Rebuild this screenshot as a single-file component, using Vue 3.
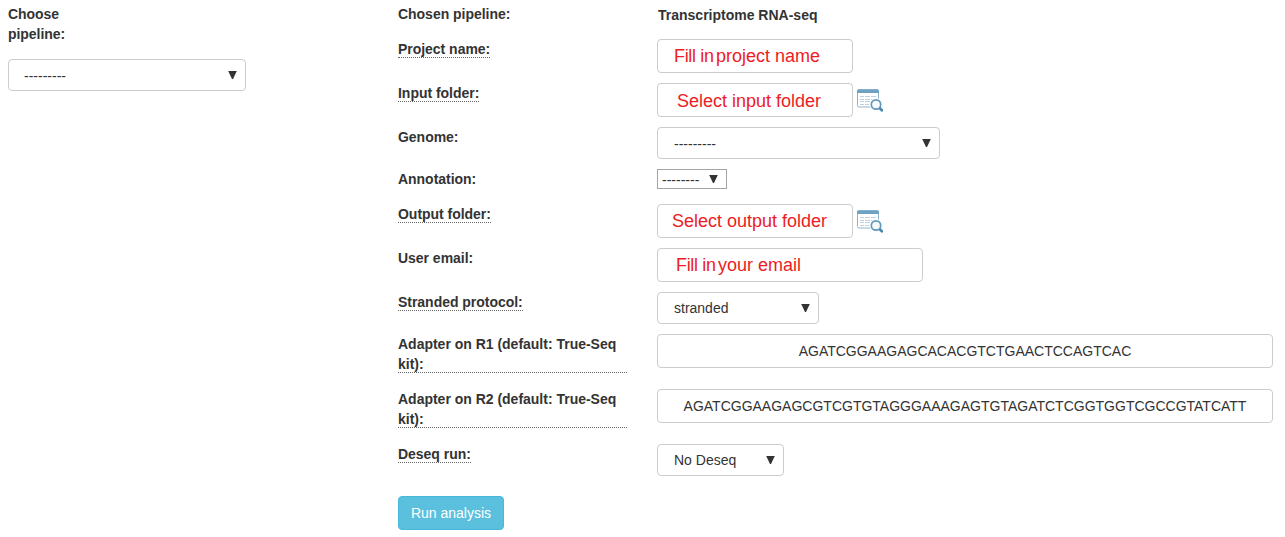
<script setup>
const rows = [
  { id: 'project', label: 'Project name:', tip: true, kind: 'input', parts: ['Fill in', 'project name'] },
  { id: 'infolder', label: 'Input folder:', tip: true, kind: 'input', parts: ['Select input folder'], browse: true },
  { id: 'genome', label: 'Genome:', kind: 'select', value: '---------' },
  { id: 'annotation', label: 'Annotation:', kind: 'select', value: '--------' },
  { id: 'outfolder', label: 'Output folder:', tip: true, kind: 'input', parts: ['Select output folder'], browse: true },
  { id: 'email', label: 'User email:', kind: 'input', parts: ['Fill in', 'your email'] },
  { id: 'stranded', label: 'Stranded protocol:', tip: true, kind: 'select', value: 'stranded' },
  { id: 'r1', label: 'Adapter on R1 (default: True-Seq kit):', tip: true, kind: 'adapter', value: 'AGATCGGAAGAGCACACGTCTGAACTCCAGTCAC' },
  { id: 'r2', label: 'Adapter on R2 (default: True-Seq kit):', tip: true, kind: 'adapter', value: 'AGATCGGAAGAGCGTCGTGTAGGGAAAGAGTGTAGATCTCGGTGGTCGCCGTATCATT' },
  { id: 'deseq', label: 'Deseq run:', tip: true, kind: 'select', value: 'No Deseq' },
]
</script>

<template>
  <div class="page">
    <aside class="side">
      <label class="side-label">Choose pipeline:</label>
      <div class="box select pipeline">
        <span class="value dashes">---------</span>
        <svg class="arrow" viewBox="0 0 9 8"><path d="M.2 0H8.8L5 8H4Z" /></svg>
      </div>
    </aside>
    <main class="form">
      <div class="row head">
        <div class="lab"><span class="text chosen">Chosen pipeline:</span></div>
        <strong class="title">Transcriptome RNA-seq</strong>
      </div>
      <div v-for="r in rows" :key="r.id" class="row" :class="r.id">
        <div class="lab"><span class="text" :class="{ tip: r.tip }">{{ r.label }}</span></div>
        <div v-if="r.kind === 'input'" class="box hint" :class="{ split: r.parts.length > 1 }">
          <span v-for="p in r.parts" :key="p">{{ p }}</span>
        </div>
        <div v-else-if="r.kind === 'select'" class="box select">
          <span class="value" :class="{ dashes: r.value.startsWith('-') }">{{ r.value }}</span>
          <svg class="arrow" viewBox="0 0 9 8"><path d="M.2 0H8.8L5 8H4Z" /></svg>
        </div>
        <div v-else class="box adapter"><span>{{ r.value }}</span></div>
        <svg v-if="r.browse" class="browse" viewBox="0 0 26 23">
          <rect x=".5" y="1" width="21" height="17" rx="1.5" fill="#fff" stroke="#8fb5cd" />
          <path d="M0 4V2Q0 .2 1.8 .2H20.2Q22 .2 22 2V4Z" fill="#6fa1c1" />
          <path d="M3 7.5H7M8 7.5H13M14 7.5H19M3 10.5H7M8 10.5H13M14 10.5H18M3 12.5H7M8 12.5H13M3 15.5H7M8 15.5H12" stroke="#bdd2e0" fill="none" />
          <circle cx="19" cy="15.5" r="6.4" fill="#fff" />
          <path d="M22.6 19.1L24.8 21.2" stroke="#4c88ae" stroke-width="2.8" stroke-linecap="round" />
          <circle cx="19" cy="15.5" r="4.7" fill="#f5fafc" stroke="#6198bb" stroke-width="1.7" />
        </svg>
      </div>
      <button class="run">Run analysis</button>
    </main>
  </div>
</template>

<style>
body { background: #fff; }
</style>

<style scoped>
.page {
  display: flex;
  height: 537px;
  overflow: hidden;
  color: #333;
  font: 14px/20px "Liberation Sans", Arial, sans-serif;
}
.side { width: 390px; padding: 4px 0 0 8px; box-sizing: border-box; }
.side-label { display: block; width: 70px; height: 40px; margin-bottom: 15px; font-weight: bold; letter-spacing: -0.05px; }
.form { width: 875px; padding-left: 8px; }
.row { display: flex; height: 44px; align-items: flex-start; }
.lab { width: 229px; margin-right: 30px; font-weight: bold; flex: none; letter-spacing: -0.03px; }
.r1 .lab, .r2 .lab { letter-spacing: -0.01px; }
.text { display: inline-block; position: relative; vertical-align: top; }
.tip::after {
  content: "";
  position: absolute;
  left: 0;
  right: 0;
  bottom: 1px;
  border-bottom: 1px dotted #666;
}
.head { height: 35px; padding-top: 4px; }
.title { margin: 1px 0 0 1px; }
.genome, .stranded { height: 42px; }
.annotation { height: 35px; }
.r1, .r2 { height: 55px; }
.deseq { height: 52px; }
.box {
  box-sizing: border-box;
  display: flex;
  align-items: center;
  border: 1px solid #ccc;
  border-radius: 4px;
  background: #fff;
  white-space: nowrap;
}
.select { height: 32px; padding: 0 8px 0 16px; justify-content: space-between; }
.dashes { padding-top: 1px; }
.arrow { width: 9px; height: 8px; fill: #333; margin-top: -1px; flex: none; }
.pipeline { width: 238px; }
.pipeline .dashes { margin-left: -1px; }
.genome .box { width: 283px; }
.stranded .box { width: 162px; }
.deseq .box { width: 127px; }
.annotation .box { width: 70px; height: 20px; padding: 0 8px 0 4px; border-color: #a5a5a5; border-radius: 0; }
.hint { width: 196px; height: 34px; padding-left: 16px; color: #ed1c24; font-size: 18px; }
.split { gap: 2.4px; }
.split span:first-child { letter-spacing: -0.35px; }
.infolder .hint { padding: 2px 0 0 19px; }
.outfolder .hint { padding-left: 14px; }
.email .hint { width: 266px; padding-left: 18px; }
.adapter { width: 616px; height: 34px; justify-content: center; }
.browse { width: 26px; height: 23px; margin: 6px 0 0 4px; flex: none; }
.run {
  display: block;
  width: 106px;
  height: 34px;
  padding: 0;
  border: 1px solid #46b8da;
  border-radius: 4px;
  background: #5bc0de;
  color: #fff;
  font: 14px/20px "Liberation Sans", Arial, sans-serif;
}
</style>
